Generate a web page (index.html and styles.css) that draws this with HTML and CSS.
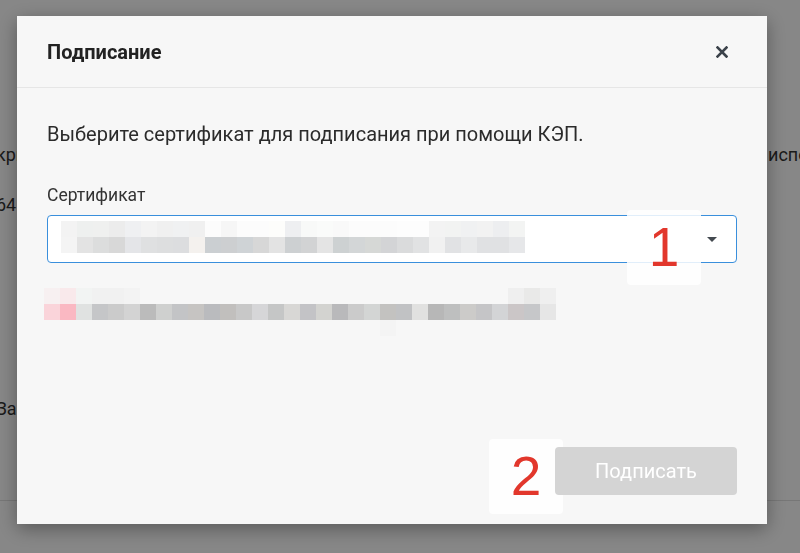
FILE: index.html
```html
<!DOCTYPE html>
<html lang="ru">
<head>
  <meta charset="UTF-8">
  <title>Подписание</title>
  <link rel="stylesheet" href="styles.css">
</head>
<body>
  <!-- page under the dialog -->
  <div class="page">
    <div class="page-row first">
      <span class="cell-left">криптопровайдер КриптоПро CSP</span>
      <span class="cell-right">используется</span>
    </div>
    <div class="page-row second">
      <span class="cell-left">64</span>
    </div>
    <div class="page-row third">
      <span class="cell-left">Зарегистрировать</span>
    </div>
    <div class="page-line"></div>
  </div>

  <div class="backdrop"></div>

  <div class="modal">
    <div class="modal-header">
      <h2 class="modal-title">Подписание</h2>
      <button class="modal-close" aria-label="Закрыть">
        <svg width="12" height="12" viewBox="0 0 12 12">
          <path d="M1.5 1.5 L10.5 10.5 M10.5 1.5 L1.5 10.5" stroke="#3b424a" stroke-width="2.6" stroke-linecap="square"/>
        </svg>
      </button>
    </div>

    <div class="modal-body">
      <p class="intro">Выберите сертификат для подписания при помощи КЭП.</p>

      <label class="field-label">Сертификат</label>
      <div class="select">
        <div class="pixels" id="certPixels"></div>
        <span class="select-arrow"></span>
      </div>

      <div class="pixels cert-info" id="infoPixels"></div>

      <div class="modal-footer">
        <button class="btn-sign" disabled>Подписать</button>
      </div>
    </div>

    <div class="mark mark-one">1</div>
    <div class="mark mark-two">2</div>
  </div>

  <script>
    // Blurred certificate data, one colour per 16px block.
    const certRows = [
      'f3f3f3 eef0ef eff0ef ececec eff0f2 f3f3f3 f0f0f0 f0f1f2 f0f0f0 fcfcfc f6f6f6 fcfcfc fcfcfc fdfdfb eeeff1 f8f9f8 fafbfa f9f9f9 fcfcfc fcfcfc fcfcfc fdfdfd fdfdfd f3f3f3 f2f3f2 f0f1f2 f2f2f2 edeef0 f3f4f3',
      'f4f4f4 e3e3e3 dcdddd d8d8d8 e4e5e8 dfe0e1 dddedf dcdddf f4f1ee cbcfd2 cdcfd1 cfd3d6 d7d7d7 e3e3e3 cdd0d2 d2d3d4 e4e4e4 cdd1d2 d3d6d7 d6d8d6 d3d4d6 dadbdc e1e2e3 f1f1f1 e1e2e4 e8e9ea e0e1e3 e0e1e3 e6e7e9'
    ];

    const infoRows = [
      'f7f0f1 f9e9eb f2f4f3 f1f1f1 f1f1f1 f3f3f3 - - - - - - - - - - - - - - - - - - - - - - - efefef e9e9e8 efefef',
      'fad4da fab8c2 e0e2e1 c5c6c8 cbcbcb d3d3d3 bbbbbb cfd0cf c3c4c6 c6c4c2 babbbe c1bfbd c8c8c8 d6d6d8 c5c6c6 d8d7d5 c3c3c6 d3d3d0 b9b9bb cbcbcb d3d5d4 c3c2c0 c1c2c4 e1e1e0 b7b7b7 bebfbf cccbc9 c5c5c7 d3d4d6 cbc6c7 c6c7c9 e6e6e6',
      '- - - - - - - - - - - - - - - - - - - - - f4f4f4'
    ];

    function renderPixels(el, rows) {
      rows.forEach(row => {
        const line = document.createElement('div');
        line.className = 'pixel-row';
        row.split(' ').forEach(color => {
          const cell = document.createElement('span');
          cell.className = 'pixel';
          if (color !== '-') cell.style.background = '#' + color;
          line.appendChild(cell);
        });
        el.appendChild(line);
      });
    }

    renderPixels(document.getElementById('certPixels'), certRows);
    renderPixels(document.getElementById('infoPixels'), infoRows);
  </script>
</body>
</html>
```

FILE: styles.css
```css
html, body {
  margin: 0;
  height: 100%;
  overflow: hidden;
}
body {
  font-family: Roboto, "Noto Sans", sans-serif;
  background: #fff;
  color: #333;
}

/* Page under the dialog */
.page {
  padding-top: 143px;
  margin-left: -4px;
  font-size: 18px;
  color: #333;
}
.page-row {
  display: grid;
  grid-template-columns: 772px auto;
  height: 24px;
  line-height: 24px;
  white-space: nowrap;
}
.page-row.second {
  margin-top: 26px;
}
.page-row.third {
  margin-top: 180px;
}
.page-line {
  margin-top: 79px;
  margin-left: 4px;
  border-top: 1px solid #e1e1e1;
}

.backdrop {
  position: fixed;
  inset: 0;
  background: rgba(0, 0, 0, 0.47);
}

/* Dialog */
.modal {
  position: fixed;
  left: 17px;
  top: 16px;
  width: 750px;
  height: 508px;
  background: #f7f7f7;
  box-shadow: 0 5px 18px rgba(0, 0, 0, 0.35);
  display: flex;
  flex-direction: column;
}
.modal-header {
  height: 71px;
  padding: 0 39px 0 30px;
  display: flex;
  align-items: center;
  justify-content: space-between;
  border-bottom: 1px solid #e6e6e6;
}
.modal-title {
  margin: 0;
  font-size: 20px;
  font-weight: 700;
  color: #222;
}
.modal-close {
  border: none;
  background: none;
  padding: 0;
  width: 12px;
  height: 12px;
  display: flex;
}
.modal-body {
  flex: 1;
  display: flex;
  flex-direction: column;
  padding: 32px 30px 29px;
}
.intro {
  margin: 0;
  font-size: 20px;
  line-height: 28px;
  color: #2b2b2b;
}
.field-label {
  margin-top: 35px;
  font-size: 17.5px;
  line-height: 24px;
  color: #333;
}
.select {
  box-sizing: border-box;
  margin-top: 8px;
  height: 48px;
  border: 1px solid #3a8fdc;
  border-radius: 4px;
  background: #fff;
  display: flex;
  align-items: flex-start;
  padding: 5px 19px 0 13px;
}
.select-arrow {
  margin-left: auto;
  margin-top: 16px;
  width: 0;
  height: 0;
  border-left: 5px solid transparent;
  border-right: 5px solid transparent;
  border-top: 5px solid #444a50;
}

.pixels {
  display: flex;
  flex-direction: column;
}
.pixel-row {
  display: flex;
}
.pixel {
  width: 16px;
  height: 16px;
}
.cert-info {
  margin: 25px 0 0 -3px;
}

.modal-footer {
  margin-top: auto;
  display: flex;
  justify-content: flex-end;
}
.btn-sign {
  position: relative;
  z-index: 2;
  width: 182px;
  height: 48px;
  border: none;
  border-radius: 4px;
  background: #d4d4d4;
  color: #fff;
  font-family: Roboto, "Noto Sans", sans-serif;
  font-size: 20px;
}

/* Numbered annotation marks */
.mark {
  position: absolute;
  z-index: 1;
  width: 74px;
  height: 75px;
  border-radius: 4px;
  background: rgba(255, 255, 255, 0.85);
  color: #e2372c;
  font-family: "Liberation Sans", Arial, sans-serif;
  font-size: 55px;
  line-height: 75px;
  text-align: center;
}
.mark-one {
  left: 610px;
  top: 194px;
}
.mark-two {
  left: 472px;
  top: 423px;
}
```
